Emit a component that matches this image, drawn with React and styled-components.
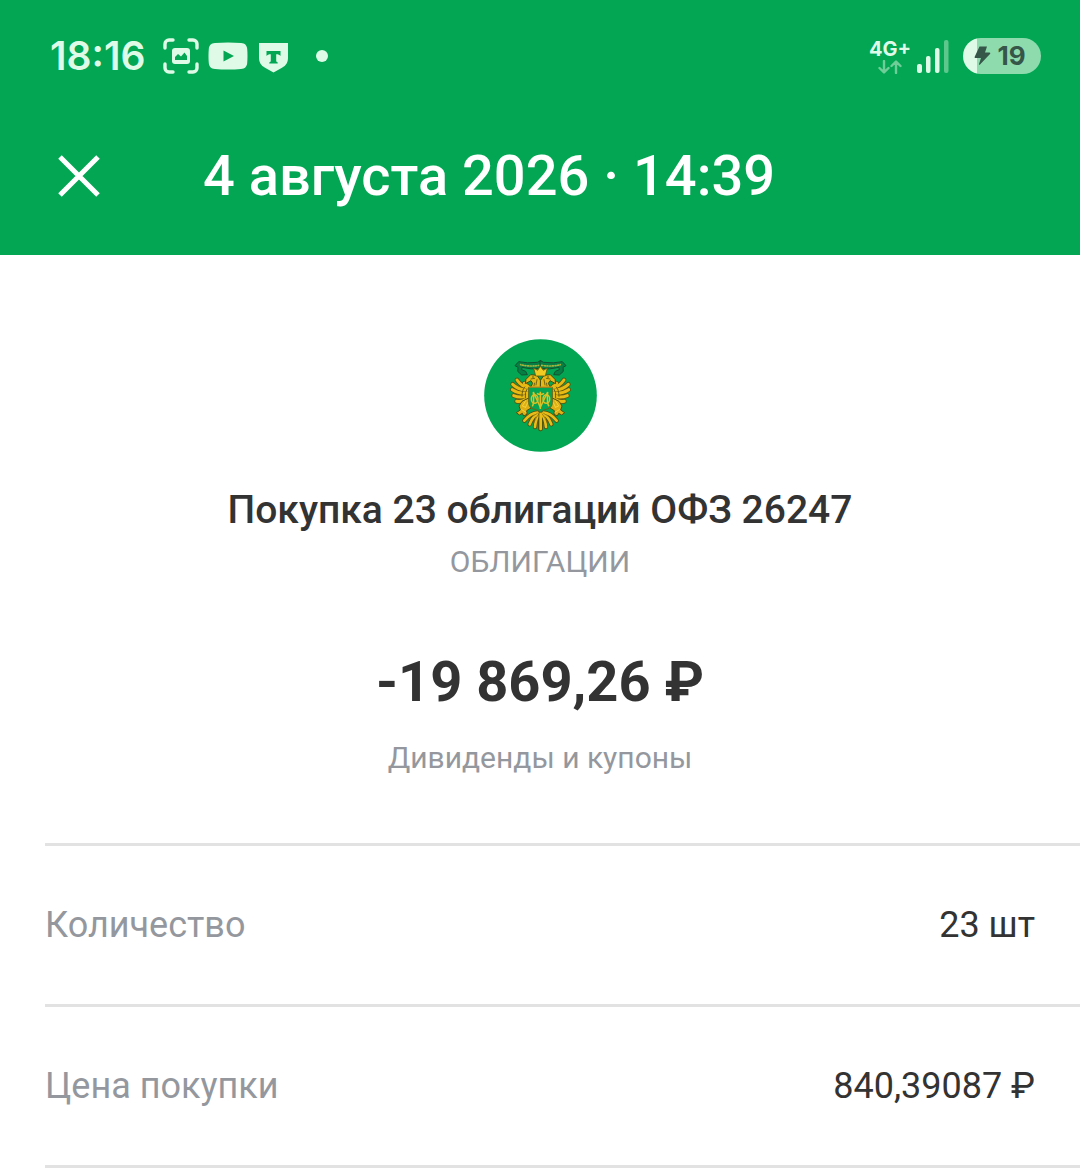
import React from 'react';
import styled, { createGlobalStyle } from 'styled-components';

const details = [
    { label: 'Количество', value: '23 шт' },
    { label: 'Цена покупки', value: '840,39087 ₽' },
];

const ScreenshotIcon = () => (
    <svg width="36" height="36" viewBox="0 0 36 36" fill="none" aria-hidden="true">
        <path d="M2 10V6a4 4 0 0 1 4-4h4M26 2h4a4 4 0 0 1 4 4v4M34 26v4a4 4 0 0 1-4 4h-4M10 34H6a4 4 0 0 1-4-4v-4" stroke="#dffbe8" strokeWidth="3.4" strokeLinecap="round" />
        <rect x="9" y="10" width="18" height="16" rx="3" fill="#dffbe8" />
        <path d="M12 22v-3l3-3 3 2.500 3.500-4L24 18v4z" fill="#02a653" />
    </svg>
);

const VideoIcon = () => (
    <svg width="40" height="28" viewBox="0 0 40 28" aria-hidden="true">
        <path d="M7 1C15 .3 25 .3 33 1c4 .3 6 2.500 6.200 6 .4 5 .4 9 0 14-.2 3.500-2.200 5.700-6.200 6-8 .7-18 .7-26 0-4-.3-6-2.500-6.200-6-.4-5-.4-9 0-14C1 3.500 3 1.300 7 1z" fill="#dffbe8" />
        <path d="M15.500 8.500v11L26 14z" fill="#02a653" />
    </svg>
);

const BankIcon = () => (
    <svg width="31" height="34" viewBox="-2 -4 31 34" aria-hidden="true">
        <path d="M0 0h29v14.500c0 5-2 8-6 10.200L14.500 29.500 6 24.700c-4-2.200-6-5.200-6-10.200z" fill="#dffbe8" />
        <path d="M7.500 8h14v5c-1-1.200-2-1.700-4.300-1.700v6.200c0 1.200.5 1.800 1.500 1.800v1.200h-8.400v-1.200c1 0 1.500-.6 1.500-1.800v-6.200c-2.300 0-3.300.5-4.300 1.700z" fill="#02a653" />
    </svg>
);

const DataArrowsIcon = () => (
    <svg width="24" height="14" viewBox="0 0 24 14" fill="none" aria-hidden="true">
        <path d="M6 1v11M1.500 8L6 12.500 10.500 8M18 13V2M13.500 6L18 1.500 22.500 6" stroke="#6fce98" strokeWidth="2.400" strokeLinecap="round" strokeLinejoin="round" />
    </svg>
);

const SignalIcon = () => (
    <svg width="32" height="34" viewBox="0 0 32 34" aria-hidden="true">
        <rect x="0" y="25" width="5" height="9" rx="2" fill="#dffbe8" />
        <rect x="9" y="17" width="4.500" height="17" rx="2" fill="#dffbe8" />
        <rect x="18" y="9" width="4.500" height="25" rx="2" fill="#dffbe8" />
        <rect x="27" y="1" width="4.500" height="33" rx="2" fill="#5ec78c" />
    </svg>
);

const BoltIcon = () => (
    <svg width="17" height="20" viewBox="0 0 17 20" aria-hidden="true">
        <path d="M5.500.5h7.500L11 6.500h4.500c.8 0 1 .8.500 1.400L6 18.500c-.6.600-1.300.1-1-.6L7 12H1.500c-.8 0-1-.6-.8-1.300z" fill="#355648" />
    </svg>
);

const CloseIcon = () => (
    <svg width="42" height="42" viewBox="0 0 42 42" fill="none" aria-hidden="true">
        <path d="M2 2l38 38M40 2L2 40" stroke="#fff" strokeWidth="5" />
    </svg>
);

// one side of the eagle, drawn twice around the vertical axis
const EagleHalf = () => (
    <g strokeLinejoin="round" strokeLinecap="round">
        {/* ribbon */}
        <path d="M198 93l-10 5q-30 4-56-2l-11 12 9 5-1 12 12 11 17-1-5-10-12-5 1-7q28 8 56 3z" fill="#067f45" stroke="#14502f" strokeWidth="3" />
        <path d="M194 107q-30 5-56-2" stroke="#a4b43d" strokeWidth="5" strokeDasharray="3 5" fill="none" />
        {/* wing feathers */}
        <path d="M164 164l-17 3-26 2 8 34 16 20 20-6z" fill="#a8860f" />
        <g stroke="#5d5410" strokeWidth="14" fill="none">
            <path d="M163 174q-22-2-36-23" />
            <path d="M161 180q-26 4-47-16" />
            <path d="M160 189q-24 6-47-9" />
            <path d="M158 197q-18 10-41 1" />
            <path d="M158 204q-12 14-32 11" />
            <path d="M160 170q-8-2-11-9" />
        </g>
        <g stroke="#e8ba14" strokeWidth="9" fill="none">
            <path d="M163 174q-22-2-36-23" />
            <path d="M161 180q-26 4-47-16" />
            <path d="M160 189q-24 6-47-9" />
            <path d="M158 197q-18 10-41 1" />
            <path d="M158 204q-12 14-32 11" />
            <path d="M160 170q-8-2-11-9" />
        </g>
        <path d="M150 172q-8 8-8 28M157 178q-7 8-5 27" stroke="#6c5d12" strokeWidth="3" fill="none" />
        {/* neck and head */}
        <path d="M197 174l-29-1 6-12-5-8-17 9 2-13 14-14 19 2 10 14z" fill="#e6b816" stroke="#4b4d10" strokeWidth="3" />
        <path d="M180 146l-11 2M187 150l-3 16M180 160l-2 8" stroke="#635711" strokeWidth="2.500" />
        <circle cx="175" cy="142" r="2" fill="#243e18" />
        {/* leg */}
        <path d="M160 206l-18 9-9 14 4 12-12 8 9 7 9-5 4 8 10-5-1-11 13-8 3-13z" fill="#dfb015" stroke="#534e0e" strokeWidth="3" />
        <path d="M153 213l-10 16 10 4M141 240l13 8M159 219l-6 13" stroke="#f3d33a" strokeWidth="3" fill="none" />
        {/* tail */}
        <g stroke="#55500f" strokeWidth="13" fill="none">
            <path d="M188 249q-20 1-39 24" />
            <path d="M190 252q-16 8-25 32" />
            <path d="M193 254q-10 13-12 38" />
            <path d="M197 252v46" />
        </g>
        <g stroke="#e9bc17" strokeWidth="8" fill="none">
            <path d="M188 249q-20 1-39 24" />
            <path d="M190 252q-16 8-25 32" />
            <path d="M193 254q-10 13-12 38" />
            <path d="M197 252v46" />
        </g>
        <path d="M188 251q-16 7-28 23M192 253q-10 12-17 33" stroke="#7b6512" strokeWidth="2" fill="none" />
    </g>
);

const EmblemIcon = () => (
    <svg width="113" height="113" viewBox="28 28 339 339" role="img" aria-label="Минфин">
        <circle cx="197.500" cy="197.500" r="169" fill="#02a653" />
        <EagleHalf />
        <g transform="matrix(-1 0 0 1 395 0)"><EagleHalf /></g>
        <path d="M183 139l-6-24 12 7 8-12 9 12 12-7-6 24z" fill="#f2cb22" stroke="#655a10" strokeWidth="2.500" />
        <path d="M162 173h71v46q0 15-15 19-12 2-20 10-9-8-21-10-15-4-15-19z" fill="#05a453" stroke="#65661a" strokeWidth="3" />
        <path d="M163 172h69" stroke="#d39b22" strokeWidth="3" />
        <g fill="none" stroke="#dcc025" strokeWidth="4.500">
            <path d="M173 230q6-8 3-43l21 46 22-46q-3 35 4 43" />
            <path d="M197 186v52M187 191q10 7 21 0" />
            <ellipse cx="180" cy="208" rx="10" ry="13" />
            <ellipse cx="215" cy="208" rx="10" ry="13" />
        </g>
    </svg>
);

export default function App() {
    return (
        <Page>
            <GlobalStyle />
            <Header>
                <StatusBar>
                    <StatusGroup>
                        <Clock>18:16</Clock>
                        <Notifications>
                            <ScreenshotIcon />
                            <VideoIcon />
                            <BankIcon />
                        </Notifications>
                        <MoreDot />
                    </StatusGroup>
                    <StatusGroup>
                        <Network>
                            <span>4G+</span>
                            <DataArrowsIcon />
                        </Network>
                        <SignalIcon />
                        <Battery>
                            <BoltIcon />
                            <span>19</span>
                        </Battery>
                    </StatusGroup>
                </StatusBar>
                <TitleBar>
                    <CloseButton type="button" aria-label="Закрыть">
                        <CloseIcon />
                    </CloseButton>
                    <Title>4 августа 2026 · 14:39</Title>
                </TitleBar>
            </Header>
            <main>
                <Summary>
                    <EmblemIcon />
                    <Operation>Покупка 23 облигаций ОФЗ 26247</Operation>
                    <Category>ОБЛИГАЦИИ</Category>
                    <Amount>-19 869,26 ₽</Amount>
                    <Account>Дивиденды и купоны</Account>
                </Summary>
                <Details>
                    {details.map(({ label, value }) => (
                        <Row key={label}>
                            <dt>{label}</dt>
                            <dd>{value}</dd>
                        </Row>
                    ))}
                </Details>
            </main>
        </Page>
    );
}

const GlobalStyle = createGlobalStyle`
* {
    box-sizing: border-box;
}
body {
    margin: 0;
    background: #fff;
}
svg {
    display: block;
    flex-shrink: 0;
}
`;

const Page = styled.div`
font-family: Roboto, 'Noto Sans', sans-serif;
color: #333;
`;

const Header = styled.header`
background: #02a653;
color: #fff;
`;

const StatusBar = styled.div`
display: flex;
justify-content: space-between;
align-items: center;
height: 112px;
padding: 0 39px 0 50px;
font-family: Inter, sans-serif;
color: #dffbe8;
`;

const StatusGroup = styled.div`
display: flex;
align-items: center;
`;

const Clock = styled.time`
min-width: 98px;
font-size: 39px;
font-weight: 600;
line-height: 44px;
`;

const Notifications = styled.div`
display: flex;
align-items: center;
gap: 9px;
margin-left: 15px;
`;

const MoreDot = styled.span`
width: 12px;
height: 12px;
margin-left: 28px;
border-radius: 50%;
background: #dffbe8;
`;

const Network = styled.div`
display: flex;
flex-direction: column;
align-items: center;
margin-right: 6px;
font-size: 20px;
font-weight: 700;
line-height: 22px;
`;

const Battery = styled.div`
display: flex;
align-items: center;
justify-content: center;
gap: 6px;
width: 78px;
height: 36px;
margin-left: 14px;
padding-right: 4px;
border-radius: 18px;
background: linear-gradient(to right, #dffbe8 14px, #8edbae 14px);
color: #355648;
font-size: 26px;
font-weight: 700;
line-height: 36px;
`;

const TitleBar = styled.div`
display: flex;
align-items: center;
padding: 24px 39px 39px;
`;

const CloseButton = styled.button`
display: flex;
align-items: center;
justify-content: center;
width: 80px;
height: 80px;
padding: 0;
border: 0;
background: none;
cursor: pointer;
`;

const Title = styled.h1`
margin: 0 0 0 84px;
font-size: 56px;
font-weight: 500;
line-height: 80px;
`;

const Summary = styled.section`
display: flex;
flex-direction: column;
align-items: center;
padding: 84px 40px 63px;
text-align: center;
`;

const Operation = styled.h2`
margin: 32px 0 0;
font-size: 39px;
font-weight: 500;
line-height: 52px;
`;

const Category = styled.p`
margin: 0;
color: #94989e;
font-size: 30px;
line-height: 52px;
`;

const Amount = styled.p`
margin: 60px 0 0;
font-size: 56px;
font-weight: 700;
line-height: 68px;
`;

const Account = styled.p`
margin: 20px 0 0;
color: #94989e;
font-size: 30px;
line-height: 44px;
`;

const Details = styled.dl`
margin: 0 0 0 45px;
border-bottom: 3px solid #e2e2e2;
`;

const Row = styled.div`
display: flex;
justify-content: space-between;
align-items: center;
padding: 54px 45px 54px 0;
border-top: 3px solid #e2e2e2;
font-size: 36px;
line-height: 50px;
dt {
    color: #94989e;
}
dd {
    margin: 0;
}
`;
